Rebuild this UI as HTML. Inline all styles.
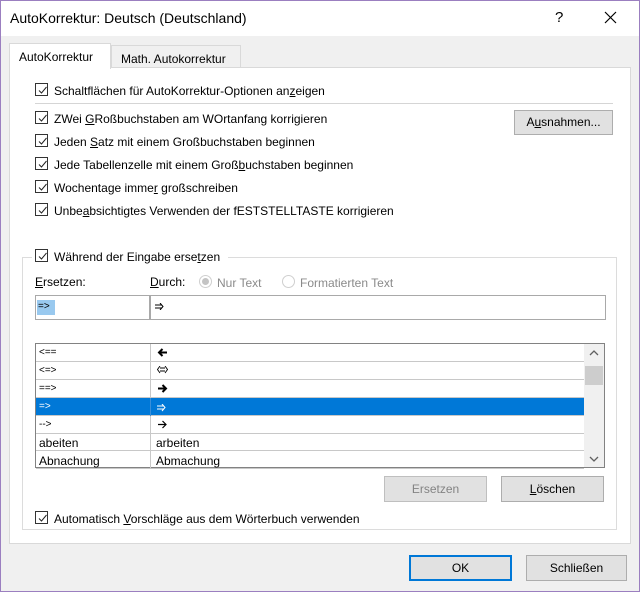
<!DOCTYPE html><html><head><meta charset="utf-8"><style>
*{margin:0;padding:0;box-sizing:border-box}
body{width:640px;height:592px;background:#f0f0f0;font-family:"Liberation Sans",sans-serif;font-size:12px;color:#000;position:relative;overflow:hidden}
.a{position:absolute}
.frame{left:0;top:0;width:640px;height:592px;border:1px solid #9b7fc0}
.cb{position:absolute;width:13px;height:13px;border:1px solid #333;background:#fff}
.cb svg{position:absolute;left:1px;top:1px}
.lbl{position:absolute;white-space:nowrap}
.btn{position:absolute;background:#e1e1e1;border:1px solid #adadad;text-align:center}
.row{position:absolute;left:36px;width:548px;height:18px;border-bottom:1px solid #c8c8c8}
.row span{position:absolute;top:3px}
.row .c2{left:120px}
.row .c1{left:3px}
.row svg{position:absolute;left:121px;top:4px}
.sep{position:absolute;left:114px;top:0;width:1px;height:18px;background:#c8c8c8}
u{text-decoration:underline}
</style></head><body>
<div class="a" style="left:0;top:0;width:640px;height:36px;background:#fff"></div>
<div class="lbl" style="left:10px;top:10px;font-size:14px">AutoKorrektur: Deutsch (Deutschland)</div>
<div class="lbl" style="left:555px;top:9px;font-size:15px">?</div>
<svg class="a" style="left:604px;top:11px" width="13" height="13"><path d="M1 1L12 12M12 1L1 12" stroke="#000" stroke-width="1.2"/></svg>
<div class="a" style="left:111px;top:45px;width:130px;height:23px;background:#f0f0f0;border:1px solid #d9d9d9"></div>
<div class="lbl" style="left:121px;top:52px">Math. Autokorrektur</div>
<div class="a" style="left:9px;top:67px;width:622px;height:477px;background:#fff;border:1px solid #d9d9d9"></div>
<div class="a" style="left:9px;top:43px;width:102px;height:26px;background:#fff;border:1px solid #d9d9d9;border-bottom:none"></div>
<div class="lbl" style="left:19px;top:50px">AutoKorrektur</div>

<div class="cb" style="left:35px;top:83px"><svg width="11" height="11"><path d="M2 5.5L4.5 8L9.5 2" stroke="#222" fill="none"/></svg></div>
<div class="lbl" style="left:54px;top:84px">Schaltflächen für AutoKorrektur-Optionen an<u>z</u>eigen</div>
<div class="a" style="left:35px;top:103px;width:578px;height:1px;background:#d5d5d5"></div>

<div class="cb" style="left:35px;top:111px"><svg width="11" height="11"><path d="M2 5.5L4.5 8L9.5 2" stroke="#222" fill="none"/></svg></div>
<div class="lbl" style="left:54px;top:112px">ZWei <u>G</u>Roßbuchstaben am WOrtanfang korrigieren</div>
<div class="cb" style="left:35px;top:134px"><svg width="11" height="11"><path d="M2 5.5L4.5 8L9.5 2" stroke="#222" fill="none"/></svg></div>
<div class="lbl" style="left:54px;top:135px">Jeden <u>S</u>atz mit einem Großbuchstaben beginnen</div>
<div class="cb" style="left:35px;top:157px"><svg width="11" height="11"><path d="M2 5.5L4.5 8L9.5 2" stroke="#222" fill="none"/></svg></div>
<div class="lbl" style="left:54px;top:158px">Jede Tabellenzelle mit einem Groß<u>b</u>uchstaben beginnen</div>
<div class="cb" style="left:35px;top:180px"><svg width="11" height="11"><path d="M2 5.5L4.5 8L9.5 2" stroke="#222" fill="none"/></svg></div>
<div class="lbl" style="left:54px;top:181px">Wochentage imme<u>r</u> großschreiben</div>
<div class="cb" style="left:35px;top:203px"><svg width="11" height="11"><path d="M2 5.5L4.5 8L9.5 2" stroke="#222" fill="none"/></svg></div>
<div class="lbl" style="left:54px;top:204px">Unbe<u>a</u>bsichtigtes Verwenden der fESTSTELLTASTE korrigieren</div>

<div class="btn" style="left:514px;top:110px;width:99px;height:25px;line-height:23px">A<u>u</u>snahmen...</div>

<div class="a" style="left:22px;top:257px;width:595px;height:273px;border:1px solid #dcdcdc"></div>
<div class="a" style="left:32px;top:248px;width:196px;height:16px;background:#fff"></div>
<div class="cb" style="left:35px;top:249px"><svg width="11" height="11"><path d="M2 5.5L4.5 8L9.5 2" stroke="#222" fill="none"/></svg></div>
<div class="lbl" style="left:54px;top:250px">Während der Eingabe erse<u>t</u>zen</div>

<div class="lbl" style="left:35px;top:275px"><u>E</u>rsetzen:</div>
<div class="lbl" style="left:150px;top:275px"><u>D</u>urch:</div>
<div class="a" style="left:199px;top:275px;width:13px;height:13px;border-radius:50%;border:1px solid #cfcfcf;background:#fff"></div>
<div class="a" style="left:202px;top:278px;width:7px;height:7px;border-radius:50%;background:#c4c4c4"></div>
<div class="lbl" style="left:217px;top:276px;color:#8a8a8a">Nur Text</div>
<div class="a" style="left:282px;top:275px;width:13px;height:13px;border-radius:50%;border:1px solid #cfcfcf;background:#fff"></div>
<div class="lbl" style="left:300px;top:276px;color:#8a8a8a">Formatierten Text</div>

<div class="a" style="left:35px;top:295px;width:571px;height:25px;border:1px solid #a9a9a9;background:#fff"></div>
<div class="a" style="left:149px;top:296px;width:2px;height:23px;background:#a9a9a9"></div>
<div class="a" style="left:37px;top:300px;width:18px;height:15px;background:#99c9ef"></div>
<div class="lbl" style="left:38px;top:301px;font-size:10px">=&gt;</div>
<svg class="a" style="left:155px;top:303px" width="10" height="7"><path d="M0 2H7M0 5H7M5 0L8 3.5L5 7" stroke="#000" fill="none"/></svg>

<div class="a" style="left:35px;top:343px;width:570px;height:125px;border:1px solid #828282;background:#fff"></div>
<div class="row" style="top:344px"><span class="c1" style="font-size:10px">&lt;==</span><div class="sep"></div><svg width="11" height="9"><path d="M10 4.5H3M5.5 1L2 4.5L5.5 8" stroke="#000" fill="none" stroke-width="2"/></svg></div>
<div class="row" style="top:362px"><span class="c1" style="font-size:10px">&lt;=&gt;</span><div class="sep"></div><svg width="11" height="8"><path d="M3 2H8M3 5H8M3 0L0.5 3.5L3 7M8 0L10.5 3.5L8 7" stroke="#000" fill="none" stroke-width="0.9"/></svg></div>
<div class="row" style="top:380px"><span class="c1" style="font-size:10px">==&gt;</span><div class="sep"></div><svg width="11" height="9"><path d="M1 4.5H8M5.5 1L9 4.5L5.5 8" stroke="#000" fill="none" stroke-width="2"/></svg></div>
<div class="row" style="top:398px;background:#0078d7;color:#fff"><span class="c1" style="font-size:10px">=&gt;</span><div class="sep" style="background:#3a8fd9"></div><svg width="10" height="8" style="top:6px"><path d="M0 2H7M0 5H7M5 0L8 3.5L5 7" stroke="#fff" fill="none"/></svg></div>
<div class="row" style="top:416px"><span class="c1" style="font-size:10px">--&gt;</span><div class="sep"></div><svg width="11" height="9"><path d="M1 4.5H9M5.5 1L9 4.5L5.5 8" stroke="#000" fill="none" stroke-width="1.2"/></svg></div>
<div class="row" style="top:433px"><span class="c1">abeiten</span><div class="sep"></div><span class="c2">arbeiten</span></div>
<div class="row" style="top:451px"><span class="c1">Abnachung</span><div class="sep"></div><span class="c2">Abmachung</span></div>
<div class="a" style="left:584px;top:344px;width:20px;height:123px;background:#f0f0f0"></div>
<div class="a" style="left:585px;top:366px;width:18px;height:19px;background:#cdcdcd"></div>
<svg class="a" style="left:588px;top:349px" width="12" height="8"><path d="M2 6L6 2L10 6" stroke="#606060" fill="none" stroke-width="1.3"/></svg>
<svg class="a" style="left:588px;top:455px" width="12" height="8"><path d="M2 2L6 6L10 2" stroke="#606060" fill="none" stroke-width="1.3"/></svg>

<div class="btn" style="left:384px;top:476px;width:103px;height:26px;line-height:24px;color:#838383;border-color:#bfbfbf">Ersetzen</div>
<div class="btn" style="left:501px;top:476px;width:103px;height:26px;line-height:24px"><u>L</u>öschen</div>

<div class="cb" style="left:35px;top:511px"><svg width="11" height="11"><path d="M2 5.5L4.5 8L9.5 2" stroke="#222" fill="none"/></svg></div>
<div class="lbl" style="left:54px;top:512px">Automatisch <u>V</u>orschläge aus dem Wörterbuch verwenden</div>

<div class="btn" style="left:409px;top:555px;width:103px;height:26px;line-height:22px;border:2px solid #0078d7">OK</div>
<div class="btn" style="left:526px;top:555px;width:101px;height:26px;line-height:24px">Schließen</div>
<div class="a frame"></div>
</body></html>
